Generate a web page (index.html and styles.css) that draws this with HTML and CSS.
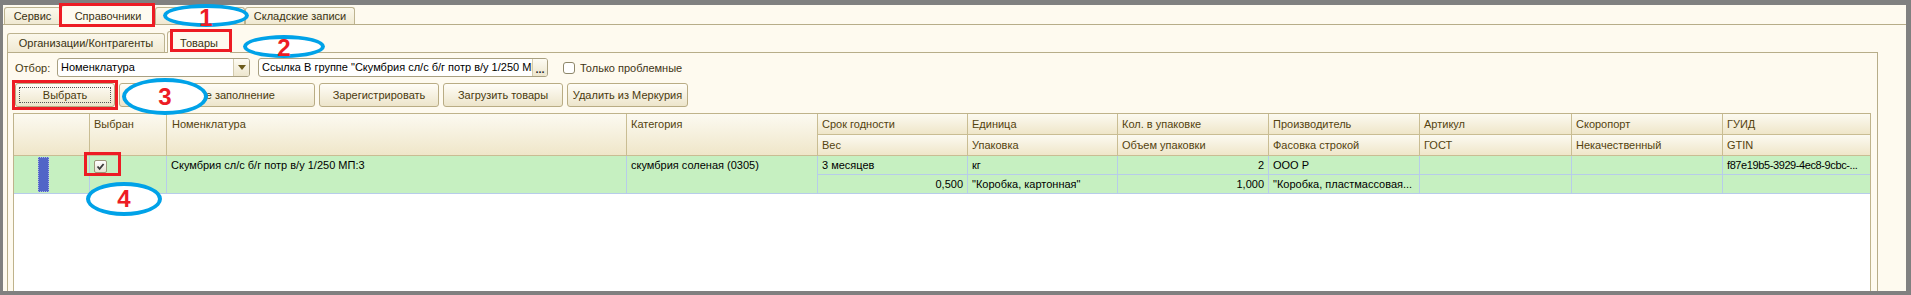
FILE: index.html
```html
<!DOCTYPE html>
<html lang="ru">
<head>
<meta charset="utf-8">
<title>Товары</title>
<link rel="stylesheet" href="styles.css">
</head>
<body>
<div class="screen">
  <div class="tabs-main">
    <div class="tab t-service">Сервис</div>
    <div class="tab tab-active-main t-ref">Справочники</div>
    <div class="tab t-docs"></div>
    <div class="tab t-store">Складские записи</div>
  </div>
  <div class="tabs-sub">
    <div class="tab t-org">Организации/Контрагенты</div>
    <div class="tab tab-active-sub t-goods">Товары</div>
  </div>
  <div class="panel">
    <div class="filter-row">
      <span class="lbl">Отбор:</span>
      <div class="combo">
        <span class="val">Номенклатура</span>
        <span class="drop"><svg width="8" height="5" viewBox="0 0 8 5"><polygon points="0,0 8,0 4,5" fill="#6B5A1C"/></svg></span>
      </div>
      <div class="field">
        <span class="val">Ссылка В группе "Скумбрия сл/с б/г потр в/у 1/250 МП:3"</span>
        <span class="dots">...</span>
      </div>
      <span class="chk"></span>
      <span class="chk-label">Только проблемные</span>
    </div>
    <div class="btn-row">
      <div class="btn w1"><span class="focus">Выбрать</span></div>
      <div class="btn w2">Групповое заполнение</div>
      <div class="btn w3">Зарегистрировать</div>
      <div class="btn w4">Загрузить товары</div>
      <div class="btn w5">Удалить из Меркурия</div>
    </div>
    <div class="grid-wrap">
      <div class="grid">
        <div class="h span"></div>
        <div class="h span">Выбран</div>
        <div class="h span hn">Номенклатура</div>
        <div class="h span">Категория</div>
        <div class="h">Срок годности</div>
        <div class="h">Единица</div>
        <div class="h">Кол. в упаковке</div>
        <div class="h">Производитель</div>
        <div class="h">Артикул</div>
        <div class="h">Скоропорт</div>
        <div class="h last">ГУИД</div>
        <div class="h">Вес</div>
        <div class="h">Упаковка</div>
        <div class="h">Объем упаковки</div>
        <div class="h">Фасовка строкой</div>
        <div class="h">ГОСТ</div>
        <div class="h">Некачественный</div>
        <div class="h last">GTIN</div>

        <div class="d span nopad"><div class="mark-bar"></div></div>
        <div class="d span"><span class="cb"><svg width="11" height="11" viewBox="0 0 11 11"><path d="M2.5 5.5 L4.6 7.8 L8.6 3" fill="none" stroke="#3A3A3A" stroke-width="1.8"/></svg></span></div>
        <div class="d span dn">Скумбрия сл/с б/г потр в/у 1/250 МП:3</div>
        <div class="d span">скумбрия соленая (0305)</div>
        <div class="d">3 месяцев</div>
        <div class="d">кг</div>
        <div class="d r">2</div>
        <div class="d">ООО Р</div>
        <div class="d"></div>
        <div class="d"></div>
        <div class="d last guid">f87e19b5-3929-4ec8-9cbc-...</div>
        <div class="d r">0,500</div>
        <div class="d">"Коробка, картонная"</div>
        <div class="d r">1,000</div>
        <div class="d">"Коробка, пластмассовая...</div>
        <div class="d"></div>
        <div class="d"></div>
        <div class="d last"></div>
      </div>
    </div>
  </div>
</div>

<div class="note rect r1"></div>
<div class="note rect r2"></div>
<div class="note rect r3"></div>
<div class="note rect r4"></div>
<div class="note oval o1">1</div>
<div class="note oval o2">2</div>
<div class="note oval o3">3</div>
<div class="note oval o4">4</div>
</body>
</html>
```

FILE: styles.css
```css
html, body {
  margin: 0;
  padding: 0;
}
body {
  width: 1911px;
  height: 295px;
  background: #808080;
  overflow: hidden;
  position: relative;
  font-family: "Liberation Sans", Arial, sans-serif;
  font-size: 11px;
}
.screen {
  margin: 5px 5px 0 3px;
  height: 286px;
  background: #FEFAEF;
  overflow: hidden;
  color: #000;
}

/* tabs */
.tabs-main {
  display: flex;
  align-items: flex-end;
  box-sizing: border-box;
  height: 20px;
  border-bottom: 1px solid #B7AD89;
  padding-left: 1px;
}
.tab {
  box-sizing: border-box;
  height: 17px;
  border: 1px solid #BDB38F;
  border-bottom: none;
  border-radius: 3px 3px 0 0;
  background: linear-gradient(#FBF8EC, #F0E9D2);
  color: #3A3212;
  display: flex;
  align-items: center;
  justify-content: center;
  white-space: nowrap;
}
.tab-active-main {
  height: 20px;
  margin-bottom: -1px;
  background: #FEFAEF;
}
.t-service { width: 57px; }
.t-ref { width: 94px; }
.t-docs { width: 90px; }
.t-store { width: 110px; }

.tabs-sub {
  display: flex;
  align-items: flex-end;
  gap: 2px;
  box-sizing: border-box;
  width: 1871px;
  height: 22px;
  margin: 6px 0 0 4px;
  border-bottom: 1px solid #B7AD89;
}
.tabs-sub .tab { height: 19px; }
.tabs-sub .tab-active-sub {
  height: 22px;
  margin-bottom: -1px;
  background: #FEFAEF;
}
.t-org { width: 158px; }
.t-goods { width: 64px; }

/* panel */
.panel {
  box-sizing: border-box;
  width: 1871px;
  height: 260px;
  margin-left: 4px;
  border-left: 1px solid #B7AD89;
  border-right: 1px solid #B7AD89;
  padding: 5px 6px 0 5px;
}
.filter-row {
  display: flex;
  align-items: center;
  height: 19px;
}
.lbl {
  margin-left: 2px;
  width: 42px;
  color: #46380F;
}
.combo, .field {
  box-sizing: border-box;
  height: 19px;
  border: 1px solid #A9A081;
  border-radius: 3px;
  background: #fff;
  display: flex;
  overflow: hidden;
}
.combo { width: 193px; }
.field { width: 290px; margin-left: 8px; }
.val {
  flex: 1;
  padding-left: 3px;
  line-height: 17px;
  white-space: nowrap;
  overflow: hidden;
}
.drop, .dots {
  width: 15px;
  flex: none;
  border-left: 1px solid #D3CBAE;
  background: linear-gradient(#FDFBF3, #EDE6CE);
  display: flex;
  align-items: center;
  justify-content: center;
}
.dots {
  box-sizing: border-box;
  padding-top: 3px;
  line-height: 12px;
  font-weight: bold;
  color: #2C2C2C;
}
.chk {
  box-sizing: border-box;
  width: 12px;
  height: 12px;
  margin-left: 15px;
  border: 1px solid #8E876A;
  border-radius: 3px;
  background: #fff;
}
.chk-label {
  margin-left: 5px;
  color: #3E3415;
}

/* buttons */
.btn-row {
  display: flex;
  gap: 4px;
  height: 24px;
  margin-top: 6px;
  padding-left: 2px;
}
.btn {
  box-sizing: border-box;
  height: 24px;
  border: 1px solid #B9AC84;
  border-radius: 3px;
  background: linear-gradient(#FFFDF7, #EDE5CB);
  color: #4A3A0E;
  display: flex;
  align-items: center;
  justify-content: center;
  white-space: nowrap;
}
.focus {
  box-sizing: border-box;
  align-self: stretch;
  flex: 1;
  margin: 3px;
  border: 1px dotted #555;
  display: flex;
  align-items: center;
  justify-content: center;
}
.w1 { width: 100px; }
.w2 { width: 196px; }
.w3 { width: 120px; }
.w4 { width: 120px; }
.w5 { width: 121px; }

/* grid */
.grid-wrap {
  box-sizing: border-box;
  width: 1858px;
  height: 200px;
  margin-top: 6px;
  border: 1px solid #BFB38B;
  border-bottom: none;
  background: #fff;
}
.grid {
  display: grid;
  grid-template-columns: 76px 77px 460px 191px 150px 150px 151px 151px 152px 151px 147px;
  grid-template-rows: 21px 21px 19px 19px;
}
.h {
  box-sizing: border-box;
  border-right: 1px solid #C9BD93;
  border-bottom: 1px solid #C9BD93;
  background: linear-gradient(#FCFAF1, #EFE6C9);
  color: #54430F;
  padding-left: 4px;
  line-height: 20px;
  white-space: nowrap;
  overflow: hidden;
}
.span { grid-row: span 2; }
.hn, .dn { padding-left: 5px; }
.d {
  box-sizing: border-box;
  border-right: 1px solid #B7CCEA;
  border-bottom: 1px solid #B7CCEA;
  background: #C6F0C1;
  line-height: 18px;
  padding: 0 4px;
  white-space: nowrap;
  overflow: hidden;
}
.last { border-right: none; }
.r { text-align: right; }
.nopad { padding: 0; }
.guid { letter-spacing: -0.4px; }
.mark-bar {
  box-sizing: border-box;
  width: 11px;
  height: 35px;
  margin: 1px 0 0 24px;
  background: #5166C7;
  border: 1px dotted #A8B4E6;
}
.cb {
  box-sizing: border-box;
  display: flex;
  align-items: center;
  justify-content: center;
  width: 13px;
  height: 13px;
  margin-top: 4px;
  border: 1px solid #9C9678;
  border-radius: 2px;
  background: linear-gradient(#FFFFFF, #E6E2D2);
}

/* annotations overlay */
.note {
  position: absolute;
  box-sizing: border-box;
}
.rect {
  border: 3px solid #ED1C24;
}
.r1 { left: 59px; top: 3px; width: 96px; height: 24px; }
.r2 { left: 170px; top: 29px; width: 62px; height: 23px; }
.r3 { left: 12px; top: 80px; width: 106px; height: 30px; }
.r4 { left: 84px; top: 152px; width: 37px; height: 24px; }
.oval {
  border: 4px solid #00A2E8;
  border-radius: 50%;
  background: #fff;
  color: #ED1C24;
  font-family: "Liberation Sans", Arial, sans-serif;
  font-weight: bold;
  font-size: 24px;
  line-height: 1;
  display: flex;
  align-items: center;
  justify-content: center;
}
.o1 { left: 163px; top: 4px; width: 86px; height: 23px; padding-top: 5px; }
.o2 { left: 243px; top: 35px; width: 82px; height: 23px; padding-top: 2px; }
.o3 { left: 122px; top: 78px; width: 86px; height: 37px; }
.o4 { left: 86px; top: 182px; width: 76px; height: 34px; }
```
